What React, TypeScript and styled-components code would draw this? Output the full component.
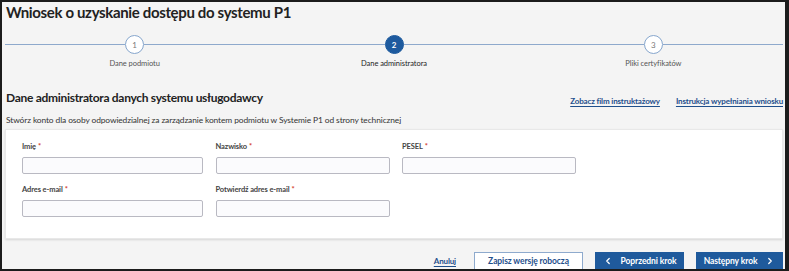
import styled, { createGlobalStyle } from 'styled-components';
import { ChevronLeft, ChevronRight } from 'lucide-react';

const GlobalStyle = createGlobalStyle`
	* {
		box-sizing: border-box;
	}
	body {
		margin: 0;
		font-family: Lato, 'Noto Sans', sans-serif;
		background: #ffffff;
	}
`;

const Page = styled.div`
	width: 789px;
	height: 271px;
	border: 2px solid #1c1c1c;
	border-right-width: 4px;
	background: #f4f4f4;
	padding: 0 0 0 3px;
	display: flex;
	flex-direction: column;
	overflow: hidden;
`;

const Title = styled.h1`
	margin: 1px 0 0 1px;
	font-size: 15px;
	font-weight: 700;
	letter-spacing: -0.35px;
	color: #222;
	line-height: 18px;
`;

const Stepper = styled.div`
	display: grid;
	grid-template-columns: repeat(3, 1fr);
	width: 778px;
	margin-top: 14px;
`;

const Step = styled.div`
	display: flex;
	flex-direction: column;
	align-items: center;
`;

const Track = styled.div`
	display: flex;
	align-items: center;
	width: 100%;
`;

const Segment = styled.div`
	flex: 1;
	height: 1.5px;
	background: #8ea9cc;
`;

const Circle = styled.div<{ $active?: boolean }>`
	width: 19px;
	height: 19px;
	border-radius: 50%;
	display: flex;
	align-items: center;
	justify-content: center;
	font-size: 8px;
	font-weight: ${(p) => (p.$active ? 700 : 400)};
	color: ${(p) => (p.$active ? '#fff' : '#7a7a7a')};
	background: ${(p) => (p.$active ? '#1d5a9e' : '#fff')};
	border: 1.5px solid ${(p) => (p.$active ? '#1d5a9e' : '#86a6cd')};
`;

const StepLabel = styled.div<{ $active?: boolean }>`
	margin-top: 5px;
	font-size: 7.5px;
	letter-spacing: -0.05px;
	color: ${(p) => (p.$active ? '#1e1e1e' : '#555')};
`;

const SectionHead = styled.div`
	display: flex;
	align-items: flex-end;
	justify-content: space-between;
	width: 778px;
	margin-top: 22px;
	padding-left: 1px;
`;

const SectionTitle = styled.h2`
	margin: 0;
	font-size: 12px;
	font-weight: 700;
	letter-spacing: -0.3px;
	color: #222;
	line-height: 16px;
`;

const Links = styled.div`
	display: flex;
	gap: 16px;
`;

const TextLink = styled.a`
	font-size: 8px;
	font-weight: 700;
	color: #1f4f8c;
	text-decoration: underline;
	text-underline-offset: 2px;
	letter-spacing: -0.15px;
	cursor: pointer;
`;

const Description = styled.p`
	margin: 9px 0 0 1px;
	font-size: 8.4px;
	color: #333;
	letter-spacing: -0.1px;
`;

const Card = styled.div`
	width: 778px;
	margin-top: 4px;
	background: #fff;
	border: 1px solid #e8e8e8;
	box-shadow: 0 1px 2px rgba(0, 0, 0, 0.12);
	padding: 12px 16px 21px;
	display: grid;
	grid-template-columns: 181px 174px 174px;
	column-gap: 12.5px;
	row-gap: 11px;
`;

const Field = styled.label`
	display: flex;
	flex-direction: column;
	gap: 5px;
`;

const FieldLabel = styled.span`
	font-size: 7.5px;
	font-weight: 700;
	color: #444;
	line-height: 10px;
	letter-spacing: -0.1px;
`;

const Required = styled.span`
	color: #d23a2a;
	margin-left: 2px;
`;

const Input = styled.input`
	height: 17px;
	width: 100%;
	border: 1px solid #b9b9c2;
	border-radius: 2px;
	background: #fbfbfd;
	font-family: inherit;
	font-size: 8px;
	&:focus {
		outline: none;
		border-color: #1d5a9e;
	}
`;

const Actions = styled.div`
	display: flex;
	align-items: center;
	justify-content: flex-end;
	width: 778px;
	margin-top: 13px;
	gap: 12px;
`;

const CancelLink = styled(TextLink)`
	margin-right: 6px;
`;

const Button = styled.button<{ $primary?: boolean; $w: number }>`
	height: 18px;
	width: ${(p) => p.$w}px;
	display: flex;
	align-items: center;
	justify-content: center;
	gap: 8px;
	font-family: inherit;
	font-size: 8.5px;
	font-weight: 700;
	letter-spacing: -0.1px;
	border: 1px solid ${(p) => (p.$primary ? '#1f5a9c' : '#8eaacd')};
	background: ${(p) => (p.$primary ? '#1f5a9c' : '#fff')};
	color: ${(p) => (p.$primary ? '#fff' : '#1f4f8c')};
	cursor: pointer;
	padding: 0;
`;

const steps = [
	{ n: 1, label: 'Dane podmiotu' },
	{ n: 2, label: 'Dane administratora', active: true },
	{ n: 3, label: 'Pliki certyfikatów' },
];

const fields = ['Imię', 'Nazwisko', 'PESEL', 'Adres e-mail', 'Potwierdź adres e-mail'];

function App() {
	return (
		<>
			<GlobalStyle />
			<Page>
				<Title>Wniosek o uzyskanie dostępu do systemu P1</Title>

				<Stepper>
					{steps.map((s) => (
						<Step key={s.n}>
							<Track>
								<Segment />
								<Circle $active={s.active}>{s.n}</Circle>
								<Segment />
							</Track>
							<StepLabel $active={s.active}>{s.label}</StepLabel>
						</Step>
					))}
				</Stepper>

				<SectionHead>
					<SectionTitle>Dane administratora danych systemu usługodawcy</SectionTitle>
					<Links>
						<TextLink>Zobacz film instruktażowy</TextLink>
						<TextLink>Instrukcja wypełniania wniosku</TextLink>
					</Links>
				</SectionHead>
				<Description>
					Stwórz konto dla osoby odpowiedzialnej za zarządzanie kontem podmiotu w Systemie P1 od strony technicznej
				</Description>

				<Card>
					{fields.map((label) => (
						<Field key={label}>
							<FieldLabel>
								{label}
								<Required>*</Required>
							</FieldLabel>
							<Input type="text" />
						</Field>
					))}
				</Card>

				<Actions>
					<CancelLink>Anuluj</CancelLink>
					<Button $w={109}>Zapisz wersję roboczą</Button>
					<Button $primary $w={89}>
						<ChevronLeft size={10} strokeWidth={3} />
						Poprzedni krok
					</Button>
					<Button $primary $w={87}>
						Następny krok
						<ChevronRight size={10} strokeWidth={3} />
					</Button>
				</Actions>
			</Page>
		</>
	);
}

export default App;
